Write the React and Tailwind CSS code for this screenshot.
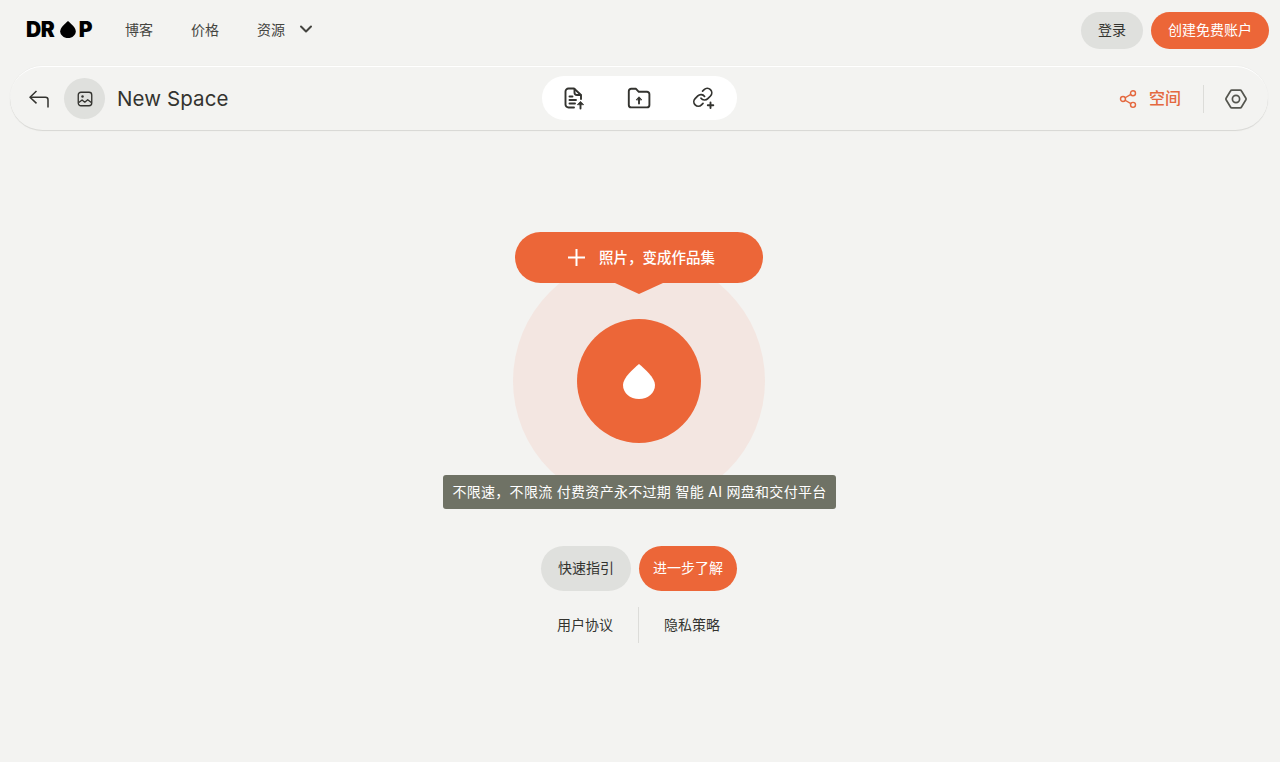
import React from "react";
import { ChevronDown, Share2 } from "lucide-react";

function Drop({ className }) {
  return (
    <svg viewBox="0 0 32 35" className={className} fill="currentColor">
      <path d="M16 0 C22 5 32 14 32 21 C32 29 25 35 16 35 C7 35 0 29 0 21 C0 14 10 5 16 0 Z" />
    </svg>
  );
}

function BackArrow() {
  return (
    <svg viewBox="0 0 20 18" className="h-[18px] w-5" fill="none" stroke="currentColor" strokeWidth="1.5" strokeLinejoin="round">
      <path d="M7.5 1 L1 7.2 L7.5 13.4" />
      <path d="M1 7.2 H16.5 A2.5 2.5 0 0 1 19 9.7 V17.5" />
    </svg>
  );
}

function ImageIcon() {
  return (
    <svg viewBox="0 0 16 16" className="h-[18px] w-[18px] text-[#33332f]" fill="none" stroke="currentColor" strokeWidth="1.2">
      <rect x="2" y="2" width="12" height="12" rx="2.4" />
      <circle cx="5.8" cy="5.8" r="1.1" fill="currentColor" stroke="none" />
      <path d="M2.5 11.2 L5.4 8.8 L7.8 10.8 L10.4 8.6 L13.6 11.2" strokeLinejoin="round" />
    </svg>
  );
}

function FileUpload() {
  return (
    <svg viewBox="0 0 22 24" className="h-6 w-[22px]" fill="none" stroke="currentColor" strokeWidth="1.9" strokeLinecap="round" strokeLinejoin="round">
      <path d="M11 21.5 H5.5 A3 3 0 0 1 2.5 18.5 V5.5 A3 3 0 0 1 5.5 2.5 H11 L18 9 V13" />
      <path d="M11.5 3 V6.5 A2.5 2.5 0 0 0 14 9 H17.5" />
      <path d="M6.5 10.5 H9.5 M6.5 14 H13 M6.5 17.5 H12" />
      <path d="M17.5 22.5 V18" />
      <path d="M14.6 18.4 L17.5 15.4 L20.4 18.4 Z" fill="currentColor" strokeWidth="0.8" />
    </svg>
  );
}

function FolderUpload() {
  return (
    <svg viewBox="0 0 24 24" className="h-6 w-6" fill="none" stroke="currentColor" strokeWidth="1.9" strokeLinejoin="round" strokeLinecap="round">
      <path d="M4.2 2.8 H9 L11.8 5.8 H20 A2.4 2.4 0 0 1 22.4 8.2 V19 A2.4 2.4 0 0 1 20 21.4 H4.2 A2.4 2.4 0 0 1 1.8 19 V5.2 A2.4 2.4 0 0 1 4.2 2.8 Z" />
      <path d="M12 17.6 V13.5" />
      <path d="M9.4 13.6 L12 10.8 L14.6 13.6 Z" fill="currentColor" strokeWidth="0.8" />
    </svg>
  );
}

function LinkPlus() {
  return (
    <svg viewBox="0 0 24 24" className="h-6 w-6" fill="none" stroke="currentColor" strokeWidth="1.9" strokeLinecap="round" strokeLinejoin="round">
      <g transform="translate(0 0.5) scale(0.9)">
        <path d="M10 13a5 5 0 0 0 7.54.54l3-3a5 5 0 0 0-7.07-7.07l-1.72 1.71" />
        <path d="M14 11a5 5 0 0 0-7.54-.54l-3 3a5 5 0 0 0 7.07 7.07l1.71-1.71" />
      </g>
      <path d="M18.5 16.5 V22 M15.8 19.2 H21.3" />
    </svg>
  );
}

function HexNut() {
  return (
    <svg viewBox="0 0 24 24" className="h-6 w-6 text-[#55564f]" fill="none" stroke="currentColor" strokeWidth="1.7" strokeLinejoin="round">
      <path d="M7.8 3.2 H16.2 A1.5 1.5 0 0 1 17.5 4 L21.9 11.2 A1.5 1.5 0 0 1 21.9 12.8 L17.5 20 A1.5 1.5 0 0 1 16.2 20.8 H7.8 A1.5 1.5 0 0 1 6.5 20 L2.1 12.8 A1.5 1.5 0 0 1 2.1 11.2 L6.5 4 A1.5 1.5 0 0 1 7.8 3.2 Z" />
      <circle cx="12" cy="12" r="3.6" />
    </svg>
  );
}

export default function App() {
  return (
    <div
      className="min-h-[762px] w-full bg-[#f3f3f1] text-[#33332f]"
      style={{ fontFamily: 'Inter, "Noto Sans CJK SC", sans-serif' }}
    >
      {/* top nav */}
      <header className="flex h-[60px] items-center justify-between pl-[26px] pr-[11px]">
        <div className="flex items-center pb-[2px] text-[14px] text-[#44443f]">
          <div className="flex w-[66px] items-center text-[21px] font-black leading-none tracking-tight text-black">
            <span>DR</span>
            <Drop className="ml-[6px] h-[17px] w-[16px]" />
            <span className="ml-auto">P</span>
          </div>
          <a className="ml-[33px]">博客</a>
          <a className="ml-[38px]">价格</a>
          <a className="ml-[38px]">资源</a>
          <ChevronDown className="ml-[11px] h-[20px] w-[20px]" strokeWidth={2.4} />
        </div>
        <div className="flex items-center gap-2 text-[14px]">
          <button className="h-[37px] w-[62px] rounded-full bg-[#dfe0dd] pb-[2px]">登录</button>
          <button className="h-[37px] w-[118px] rounded-full bg-[#ec6638] pb-[2px] text-white">创建免费账户</button>
        </div>
      </header>

      {/* space toolbar */}
      <div className="relative ml-[10px] mr-[12px] mt-[6px] flex h-[65px] items-center justify-between rounded-[33px] border-t border-b border-t-white border-b-[#d9d9d6] pl-[19px] pr-[20px] shadow-[0_0_1px_#d9d9d6]">
        <div className="flex items-center">
          <BackArrow />
          <div className="ml-[15px] flex h-[41px] w-[41px] items-center justify-center rounded-full bg-[#dfe0dd]">
            <ImageIcon />
          </div>
          <span className="ml-[12px] pt-[1px] text-[20.5px] tracking-[0.1px]">New Space</span>
        </div>
        <div className="absolute left-[532px] top-[9px] flex h-[44px] w-[195px] items-center justify-between rounded-full bg-white px-[21px]">
          <FileUpload />
          <FolderUpload />
          <LinkPlus />
        </div>
        <div className="flex items-center">
          <Share2 className="h-[20px] w-[20px] text-[#e4683f]" strokeWidth={1.7} />
          <span className="ml-[11px] pb-[1px] text-[16px] font-medium text-[#e4683f]">空间</span>
          <div className="ml-[22px] h-[28px] w-px bg-[#dcdcd9]" />
          <div className="ml-[20px]">
            <HexNut />
          </div>
        </div>
      </div>

      {/* center hero */}
      <main className="flex w-[1278px] flex-col items-center">
        <div className="relative mt-[124px] flex h-[252px] w-[252px] items-center justify-center rounded-full bg-[#f3e6e1]">
          <div className="flex h-[124px] w-[124px] items-center justify-center rounded-full bg-[#ec6638]">
            <Drop className="h-[35px] w-[32px] text-white" />
          </div>
          <div className="absolute left-[2px] top-[-23px] flex h-[51px] w-[248px] items-center justify-center rounded-[26px] bg-[#ec6638] pl-[5px] text-[14.5px] font-medium text-white">
            <svg viewBox="0 0 17 17" className="mr-[14px] h-[17px] w-[17px]" stroke="currentColor" strokeWidth="2">
              <path d="M8.5 0 V17 M0 8.5 H17" />
            </svg>
            <span>照片，变成作品集</span>
            <span className="absolute left-[100px] top-[51px] h-0 w-0 border-x-[24px] border-t-[11px] border-x-transparent border-t-[#ec6638]" />
          </div>
          <div className="absolute left-[-70px] top-[220px] flex h-[34px] w-[393px] items-center justify-center whitespace-nowrap rounded-[3px] bg-[#6f7265] pb-[2px] text-[14px] tracking-[0.3px] text-white">
            不限速，不限流 付费资产永不过期 智能 AI 网盘和交付平台
          </div>
        </div>

        <div className="mt-[39px] flex gap-2 text-[14px]">
          <button className="h-[45px] w-[90px] rounded-full bg-[#dfe0dd] pb-[2px]">快速指引</button>
          <button className="h-[45px] w-[98px] rounded-full bg-[#ec6638] pb-[2px] text-white">进一步了解</button>
        </div>

        <div className="mt-[16px] flex h-[36px] items-center text-[14px]">
          <a className="w-[81px] pb-[2px] pr-[25px] text-right whitespace-nowrap">用户协议</a>
          <div className="h-full w-px bg-[#dcdcd9]" />
          <a className="w-[82px] pb-[2px] pl-[25px] whitespace-nowrap">隐私策略</a>
        </div>
      </main>
    </div>
  );
}
